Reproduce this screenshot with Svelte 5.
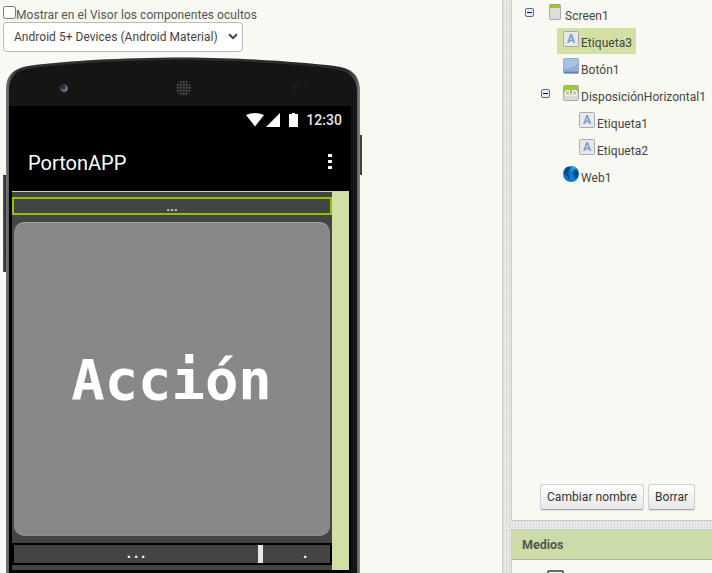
<script>
  const nodes = [
    { name: 'Screen1', kind: 'screen', x: 12, toggle: true },
    { name: 'Etiqueta3', kind: 'label', x: 45, selected: true },
    { name: 'Botón1', kind: 'button', x: 45 },
    { name: 'DisposiciónHorizontal1', kind: 'row', x: 28, toggle: true },
    { name: 'Etiqueta1', kind: 'label', x: 61 },
    { name: 'Etiqueta2', kind: 'label', x: 61 },
    { name: 'Web1', kind: 'web', x: 45 }
  ];
</script>

<main>
  <section class="viewer">
    <label class="hidden-toggle"><input type="checkbox" /><span>Mostrar en el Visor los componentes ocultos</span></label>
    <div class="select">
      <span>Android 5+ Devices (Android Material)</span>
      <svg width="10" height="7" viewBox="0 0 10 7"><path d="M1 1.2 5 5.2 9 1.2" fill="none" stroke="#444" stroke-width="2" /></svg>
    </div>
    <div class="phone">
      <svg class="shell" width="365" height="521" viewBox="0 52 365 521">
        <defs>
          <linearGradient id="edge" x1="0" x2="1" y1="0" y2="0">
            <stop offset="0" stop-color="#77797b" /><stop offset=".012" stop-color="#505355" /><stop offset=".03" stop-color="#303234" />
            <stop offset=".96" stop-color="#292a2b" /><stop offset=".99" stop-color="#505254" /><stop offset="1" stop-color="#858789" />
          </linearGradient>
          <pattern id="dots" width="3" height="3" patternUnits="userSpaceOnUse"><rect width="3" height="3" fill="#222" /><rect width="1.5" height="1.5" fill="#555" /></pattern>
        </defs>
        <path d="M3 175H7V272H3Z" fill="#343434" /><path d="M3.5 176V272" stroke="#555" />
        <path d="M358 135H362V175H358Z" fill="#414240" />
        <path d="M6 574V89C6 74 15 68 31 65.500C72 60.500 115 58 184 57.500C250 58 300 62 335 66C351 68 360 75 360 91V574Z" fill="url(#edge)" />
        <path d="M9 574V89C9 76 17 70 32 68C74 63 115 60.500 184 60C250 60.500 300 64.500 334 69C349 71 357 78 357 92V574Z" fill="#151515" />
        <circle cx="64" cy="88.500" r="4.500" fill="#333" /><circle cx="64.500" cy="88.500" r="3" fill="#777" /><circle cx="63.500" cy="87.500" r="2" fill="#27275a" />
        <circle cx="183.500" cy="88" r="7.500" fill="url(#dots)" />
        <circle cx="295" cy="87" r="3" fill="#1c1c1c" /><circle cx="306" cy="87" r="2" fill="#1c1c1c" />
      </svg>
      <div class="screen">
        <div class="status">
          <svg width="54" height="16" viewBox="0 0 54 16" fill="#fff">
            <path d="M0 3Q9-1 18 3L9 14.500Z" /><path d="M34 1V15H20Z" /><path d="M43 2H46V1H49V2H52V15H43Z" />
          </svg>
          <span>12:30</span>
        </div>
        <div class="title"><span>PortonAPP</span>
          <svg width="4" height="16" viewBox="0 0 4 16" fill="#fff"><rect width="4" height="3" rx=".6" /><rect y="6" width="4" height="3" rx=".6" /><rect y="12" width="4" height="3" rx=".6" /></svg>
        </div>
        <div class="body">
          <div class="form">
            <div class="picked">...</div>
            <div class="action">Acción</div>
            <div class="arrange"><span class="first">...</span><i></i><span class="last">.</span></div>
          </div>
        </div>
      </div>
    </div>
  </section>

  <aside>
    <section class="components">
      <div class="tree">
        {#each nodes as n}
          <div class="node" style="padding-left:{n.x}px">
            {#if n.toggle}
              <svg class="toggle" width="9" height="9" viewBox="0 0 9 9"><rect x=".5" y=".5" width="8" height="8" rx="1.500" fill="#e9edf6" stroke="#5968a3" /><path d="M2 4.500H7" stroke="#000080" /></svg>
            {/if}
            <div class="item" class:selected={n.selected} class:root={n.kind === 'screen'} class:nested={n.kind === 'row'}>
              {#if n.kind === 'screen'}
                <svg width="12" height="16" viewBox="0 0 12 16"><rect x=".5" y=".5" width="11" height="15" rx="1" fill="#ddd" stroke="#aaa" /><path d="M1 .5H11V4H1Z" fill="#9dc233" /><path d="M1 .5H11" stroke="#98ad68" /></svg>
              {:else if n.kind === 'label'}
                <svg width="16" height="16" viewBox="0 0 16 16"><rect x=".5" y=".5" width="15" height="15" rx="1" fill="#e8e8e8" stroke="#aaa" /><text x="8" y="12" text-anchor="middle" font-family="Roboto" font-size="12" font-weight="700" fill="#7b9ed0">A</text></svg>
              {:else if n.kind === 'button'}
                <svg width="16" height="16" viewBox="0 0 16 16"><rect x=".5" y=".5" width="15" height="15" rx="1" fill="#8fafd9" stroke="#9aabc1" /><path d="M1 1H15V5Q11 10 1 11Z" fill="#a9c2e4" /><path d="M1 14.300H15" stroke="#5685c2" stroke-width="1.4" /></svg>
              {:else if n.kind === 'row'}
                <svg width="16" height="16" viewBox="0 0 16 16"><rect x=".5" y=".5" width="15" height="15" rx="1" fill="#d9d9d9" stroke="#aaa" /><path d="M1 .5H15V8H1Z" fill="#9dc93c" /><path d="M6 8.500H10" stroke="#aaa" /><rect x="2.500" y="5.500" width="4" height="5" rx=".7" fill="#c3cab5" stroke="#fff" /><rect x="9.500" y="5.500" width="4" height="5" rx=".7" fill="#c3cab5" stroke="#fff" /></svg>
              {:else}
                <svg width="16" height="16" viewBox="0 0 16 16"><circle cx="8" cy="8" r="8" fill="#087bd6" /><path d="M8 .2Q14 1 15.500 6L12 8 9 6 7 3Z" fill="#189be9" /><path d="M1 4.500 4 1 7 1 7.500 3 5.500 5 6 7 4 7 6 9 6.500 12 5.500 14 4.500 11 1.500 8Z" fill="#064a82" /><path d="M10 4.500 13.500 3 15.500 7 14.500 11 12 13 11 9 9.500 7Z" fill="#064a82" /></svg>
              {/if}
              <span>{n.name}</span>
            </div>
          </div>
        {/each}
      </div>
      <div class="actions"><button>Cambiar nombre</button><button>Borrar</button></div>
    </section>
    <section class="media">
      <h2>Medios</h2>
      <div class="upload"></div>
    </section>
  </aside>
</main>

<style>
  :global(body) { overflow: hidden; }
  main { width: 712px; height: 573px; display: flex; overflow: hidden; box-sizing: border-box; font: 12px/16px Roboto, sans-serif; color: #444; background: #f8f9f3; }
  main * { box-sizing: border-box; }
  svg { display: block; flex: none; }
  .viewer { width: 502px; flex: none; padding: 5px 0 0 3px; }
  .hidden-toggle { display: flex; height: 17px; line-height: 20px; white-space: nowrap; color: #555; }
  .hidden-toggle input { width: 13px; height: 13px; margin: 1px 0 0; flex: none; }
  .hidden-toggle span { font-size: 12px; letter-spacing: .06px; }
  .select { width: 240px; height: 30px; border: 1px solid #bbb; border-radius: 4px; background: #fff; display: flex; align-items: center; justify-content: space-between; padding: 0 4px 1px 10px; font-size: 12px; letter-spacing: .03px; white-space: nowrap; }
  .phone { position: relative; width: 365px; height: 521px; margin-left: -3px; padding: 54px 0 0 9px; }
  .shell { position: absolute; left: 0; top: 0; }
  .screen { position: relative; width: 342px; height: 467px; background: #000; }
  .status { height: 28px; display: flex; align-items: center; justify-content: flex-end; padding-right: 9px; gap: 6px; font-size: 14px; font-weight: 500; color: #e6e6e6; letter-spacing: .05px; }
  .status svg { margin-top: -1px; }
  .title { height: 57px; padding: 0 19px 0 19px; display: flex; align-items: center; justify-content: space-between; font-size: 20px; color: #fff; }
  .title svg { margin-top: -2px; }
  .body { width: 337px; height: 379px; margin-left: 3px; border-top: 1px solid #d0d0d0; background: #d2e0a6; }
  .form { width: 320px; height: 378px; background: #444; padding-top: 5px; }
  .picked { height: 18px; border: 2px solid #8fc202; color: #ddd; text-align: center; font: bold 13px/15px Roboto, sans-serif; }
  .action { width: 316px; height: 314px; margin: 7px 2px; border: 1px solid #8b8b8b; border-top-color: #a2a2a2; border-radius: 10px; background: #888; color: #fff; display: flex; align-items: center; justify-content: center; font: bold 55.5px/60px "DejaVu Sans Mono", monospace; padding: 1px 1px 0 0; }
  .arrange { height: 22px; border: 2px solid #000; color: #fff; display: flex; font: bold 12px/19px "DejaVu Sans Mono", monospace; text-align: center; }
  .arrange i { width: 5px; background: #e8e8e8; }
  .first { width: 244px; }
  .last { flex: 1; padding-left: 17px; }
  aside { width: 210px; flex: none; border-left: 1px solid #ccc; padding-left: 8px; background: repeating-linear-gradient(0deg, #d8d8d866 0 1px, transparent 1px 3px), repeating-linear-gradient(90deg, #dcdcdc 0 1px, #ebebeb 1px 3px); }
  .components { height: 521px; border: solid #ccc; border-width: 0 0 1px 1px; background: #f8f9f3; overflow: hidden; }
  .tree { height: 484px; }
  .node { height: 27px; display: flex; align-items: center; white-space: nowrap; color: #444; letter-spacing: .04px; }
  .toggle { margin: -2px 5px 0 1px; }
  .item { height: 26px; display: flex; align-items: flex-start; padding: 3px 4px 0 6px; }
  .item span { margin-left: 2px; padding-top: 4px; }
  .item.root { padding-left: 10px; }
  .item.root span { margin-left: 4px; }
  .item.nested { padding-left: 8px; }
  .selected { width: 79px; background: #d2e0a6; }
  .actions { display: flex; gap: 4px; padding-left: 28px; }
  button { height: 26px; padding: 0 6px 1px; font: 12px/16px Roboto, sans-serif; letter-spacing: .06px; color: #333; white-space: nowrap; border: 1px solid #d0d0d0; border-bottom-color: #aaa; border-radius: 3px; background: linear-gradient(#fff, #e7e7e7); box-shadow: 0 1px 1px #ddd; }
  .media { height: 44px; margin-top: 8px; border-left: 1px solid #ccc; background: #f8f9f3; }
  h2 { height: 31px; margin: 0; padding: 0 10px; border-top: 1px solid #ccc; border-bottom: 1px solid #aeb3a4; font: 700 12.5px/30px Roboto, sans-serif; color: #555; background: #cbdca9; }
  .upload { width: 17px; height: 15px; margin: 10px 0 0 35px; border: 2px solid #666; border-radius: 2px; }
</style>
